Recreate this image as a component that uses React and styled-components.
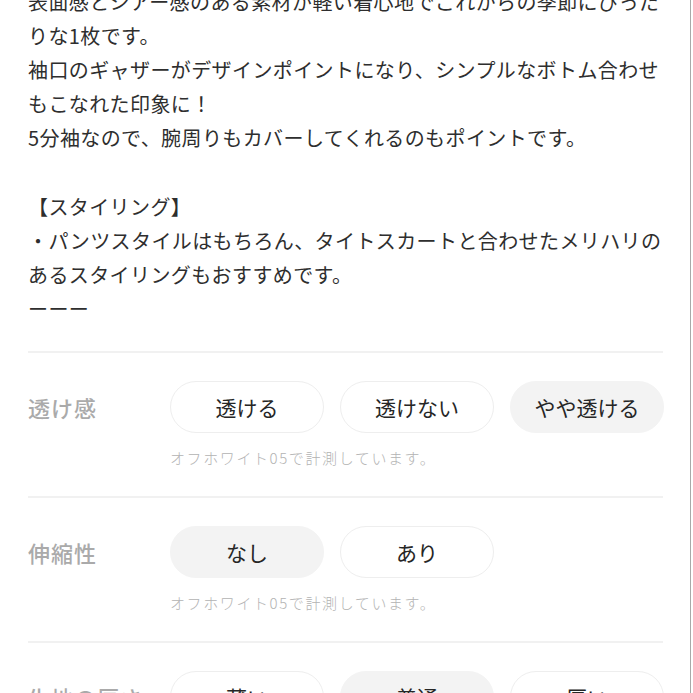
import React from "react";
import styled, { createGlobalStyle } from "styled-components";

const GlobalStyle = createGlobalStyle`
  html, body {
    margin: 0;
    padding: 0;
    background: #fff;
    overflow: hidden;
  }
  body {
    font-family: "Noto Sans CJK JP", "Noto Sans", sans-serif;
    color: #333;
  }
`;

const Page = styled.div`
  width: 691px;
  height: 693px;
  border-right: 1px solid #a9a9a9;
  box-sizing: border-box;
  padding: 0 27px 0 28px;
  overflow: hidden;
`;

const Description = styled.p`
  margin: -15px 0 0;
  font-size: 20px;
  line-height: 34.1px;
  letter-spacing: 0.4px;
  color: #2e2e2e;
  white-space: nowrap;
`;

const Section = styled.section`
  border-top: 2px solid #f1f1f1;
  margin-top: ${(p) => (p.$first ? "25px" : "0")};
  padding: 28px 0 28px;
`;

const Row = styled.div`
  display: flex;
  align-items: center;
`;

const Label = styled.div`
  width: 142px;
  flex-shrink: 0;
  font-size: 22px;
  font-weight: 500;
  color: #aaaaaa;
  letter-spacing: 1px;
`;

const Options = styled.div`
  display: flex;
  gap: 16px;
`;

const Option = styled.div`
  width: 154px;
  height: 52px;
  box-sizing: border-box;
  border-radius: 26px;
  display: flex;
  align-items: center;
  justify-content: center;
  font-size: 21px;
  color: #262626;
  background: ${(p) => (p.$active ? "#f3f3f3" : "#fff")};
  border: 1px solid ${(p) => (p.$active ? "#f3f3f3" : "#eeeeee")};
`;

const Note = styled.div`
  margin: 15px 0 0 142px;
  font-size: 15px;
  font-weight: 300;
  line-height: 20px;
  letter-spacing: 1.6px;
  color: #b3b3b3;
`;

const specs = [
  { label: "透け感", options: ["透ける", "透けない", "やや透ける"], active: 2 },
  { label: "伸縮性", options: ["なし", "あり"], active: 0 },
  { label: "生地の厚さ", options: ["薄い", "普通", "厚い"], active: 1 },
];

export default function App() {
  return (
    <>
      <GlobalStyle />
      <Page>
        <Description>
          表面感とシアー感のある素材が軽い着心地でこれからの季節にぴった
          <br />
          りな1枚です。
          <br />
          袖口のギャザーがデザインポイントになり、シンプルなボトム合わせ
          <br />
          もこなれた印象に！
          <br />
          5分袖なので、腕周りもカバーしてくれるのもポイントです。
          <br />
          <br />
          【スタイリング】
          <br />
          ・パンツスタイルはもちろん、タイトスカートと合わせたメリハリの
          <br />
          あるスタイリングもおすすめです。
          <br />
          ーーー
        </Description>
        {specs.map((s, i) => (
          <Section key={s.label} $first={i === 0}>
            <Row>
              <Label>{s.label}</Label>
              <Options>
                {s.options.map((o, j) => (
                  <Option key={o} $active={j === s.active}>
                    {o}
                  </Option>
                ))}
              </Options>
            </Row>
            <Note>オフホワイト05で計測しています。</Note>
          </Section>
        ))}
      </Page>
    </>
  );
}
